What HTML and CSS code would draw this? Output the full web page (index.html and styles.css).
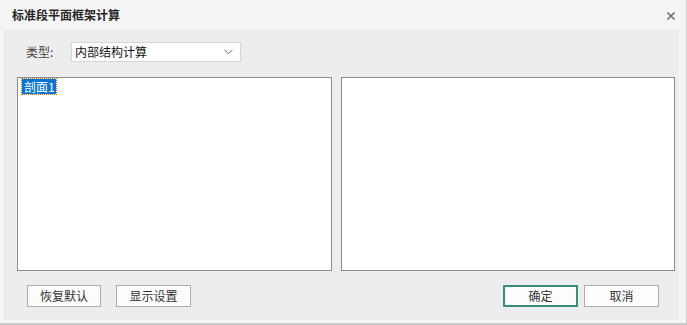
FILE: index.html
```html
<!DOCTYPE html>
<html lang="zh-CN">
<head>
<meta charset="utf-8">
<title>标准段平面框架计算</title>
<link rel="stylesheet" href="styles.css">
</head>
<body>
<div class="window">
  <div class="titlebar">
    <span class="title">标准段平面框架计算</span>
    <svg class="close" width="10" height="10" viewBox="0 0 10 10"><path d="M1.5 1.5 L8.5 8.5 M8.5 1.5 L1.5 8.5" stroke="#707070" stroke-width="1.7" fill="none"/></svg>
  </div>
  <div class="content">
    <div class="typerow">
      <span class="label">类型:</span>
      <div class="combo">
        <span class="combo-text">内部结构计算</span>
        <svg class="chev" width="9" height="6" viewBox="0 0 9 6"><path d="M0.5 0.8 L4.5 4.8 L8.5 0.8" stroke="#6a6a6a" stroke-width="1" fill="none"/></svg>
      </div>
    </div>
    <div class="lists">
      <div class="listbox left">
        <span class="item selected">剖面1</span>
      </div>
      <div class="listbox right"></div>
    </div>
    <div class="buttons">
      <div class="group">
        <button class="btn w74">恢复默认</button>
        <button class="btn">显示设置</button>
      </div>
      <div class="group tight">
        <button class="btn primary">确定</button>
        <button class="btn">取消</button>
      </div>
    </div>
  </div>
</div>
</body>
</html>
```

FILE: styles.css
```css
* { box-sizing: border-box; }
html, body { margin: 0; padding: 0; background: #f5f5f5; }
body { font-family: "Noto Sans CJK SC", "Noto Sans", sans-serif; font-size: 12px; }
.window {
  width: 687px;
  height: 325px;
  background: #f5f5f5;
  border-right: 1px solid #c9c9c9;
  border-bottom: 2px solid #c9c9c9;
  display: flex;
  flex-direction: column;
}
.titlebar {
  height: 30px;
  flex: none;
  display: flex;
  align-items: center;
  justify-content: space-between;
  padding: 0 10px 0 12px;
}
.title { font-weight: bold; color: #262626; font-size: 12px; line-height: 12px; }
.close { display: block; margin-top: 1px; }
.content {
  margin: 0 7px 0 3px;
  height: 290px;
  background: #ededed;
  display: flex;
  flex-direction: column;
  padding: 12px 0 0 14px;
}
.typerow { display: flex; align-items: center; height: 20px; padding-left: 9px; }
.label { color: #444; width: 45px; line-height: 20px; }
.combo {
  width: 170px;
  height: 20px;
  background: #fff;
  border: 1px solid #d6d6d6;
  display: flex;
  align-items: center;
  justify-content: space-between;
  padding: 0 7px 0 3px;
}
.combo-text { color: #111; line-height: 18px; }
.chev { display: block; }
.lists { display: flex; gap: 9px; margin-top: 15px; height: 194px; }
.listbox { background: #fff; border: 1px solid #8c8c94; height: 194px; }
.listbox.left { width: 315px; padding: 1px 0 0 4px; }
.listbox.right { width: 334px; }
.item { display: inline-block; line-height: 15px; height: 15px; padding: 0 1px 0 2px; color: #fff; vertical-align: top; }
.item.selected { background: #0a74d6; outline: 1px dotted #d47a00; outline-offset: 0; }
.buttons {
  display: flex;
  justify-content: space-between;
  margin-top: 14px;
  padding: 0 20px 0 10px;
}
.group { display: flex; gap: 15px; }
.group.tight { gap: 6px; }
.btn {
  width: 75px;
  height: 22px;
  background: #fdfdfd;
  border: 1px solid #adadad;
  color: #333;
  font-family: "Noto Sans CJK SC", "Noto Sans", sans-serif;
  font-size: 12px;
  padding: 0;
  line-height: 20px;
}
.btn.w74 { width: 74px; }
.btn.primary { border: 2px solid #3a8e7e; line-height: 18px; }
```
